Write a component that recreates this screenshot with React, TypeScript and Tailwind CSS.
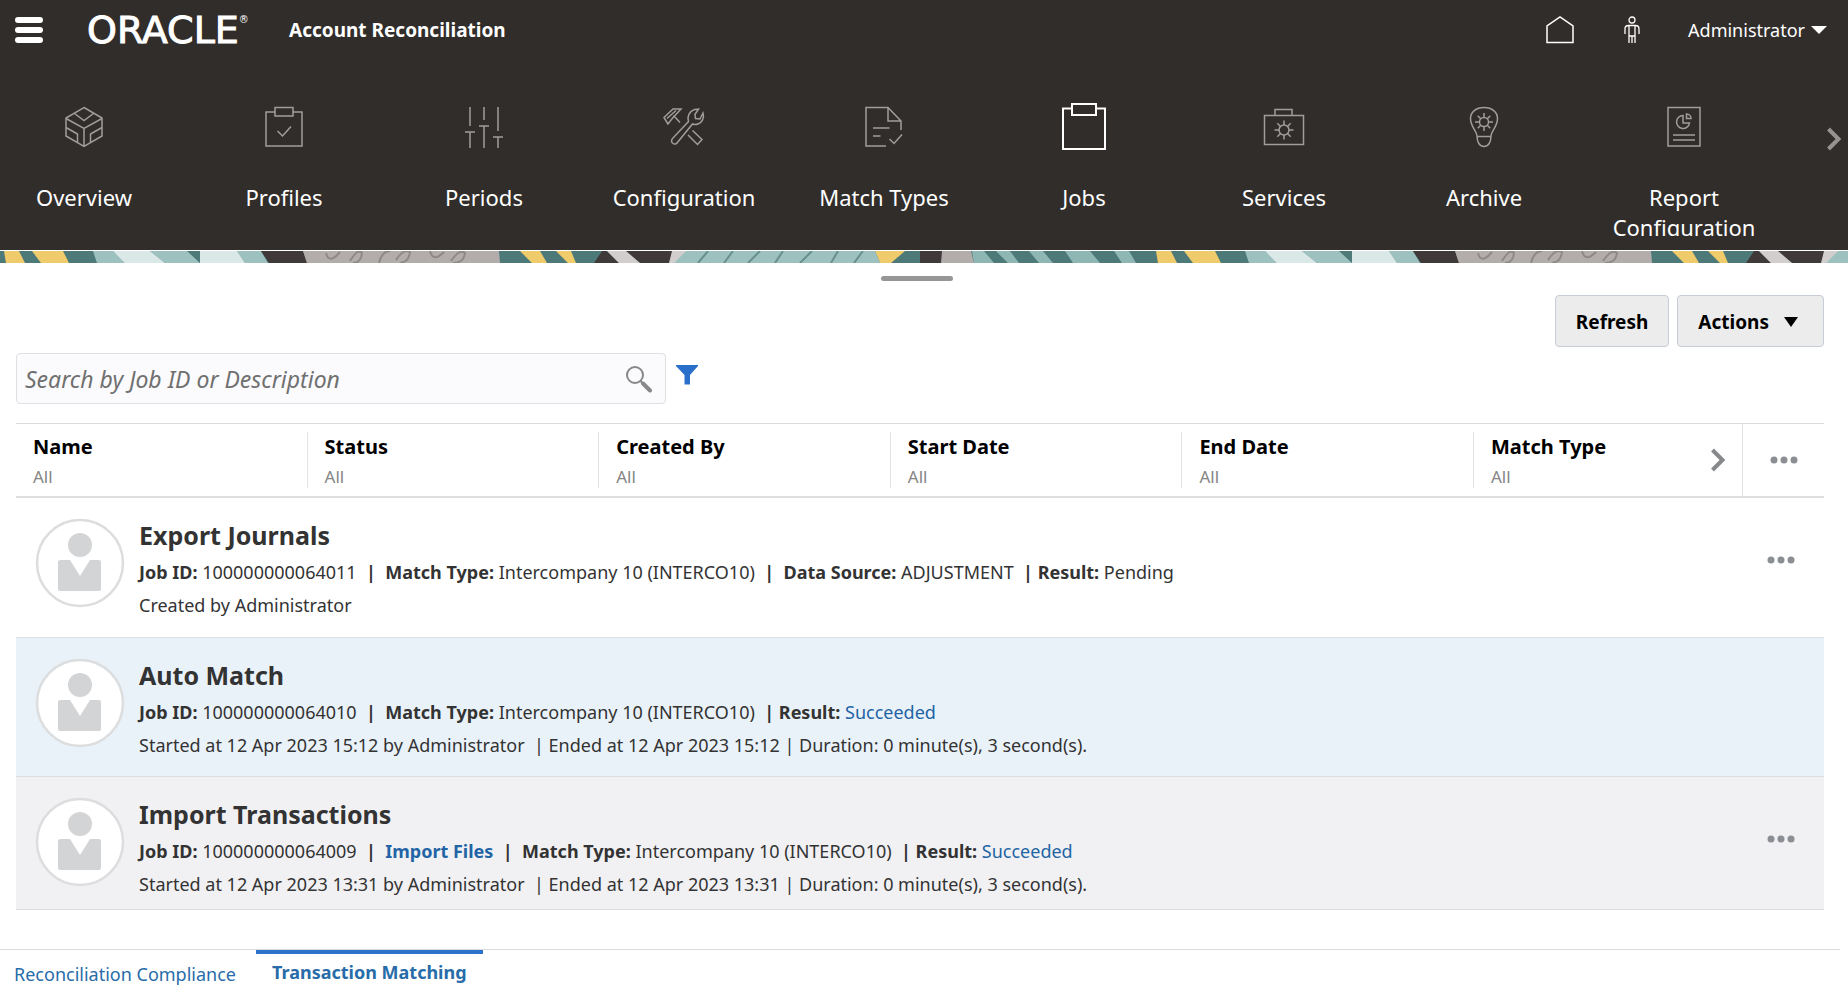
import React from 'react';

const tabs = [
  { label: 'Overview', icon: <OverviewIcon /> },
  { label: 'Profiles', icon: <ProfilesIcon /> },
  { label: 'Periods', icon: <PeriodsIcon /> },
  { label: 'Configuration', icon: <ConfigurationIcon /> },
  { label: 'Match Types', icon: <MatchTypesIcon /> },
  { label: 'Jobs', icon: <JobsIcon />, active: true },
  { label: 'Services', icon: <ServicesIcon /> },
  { label: 'Archive', icon: <ArchiveIcon /> },
  { label: 'Report Configuration', icon: <ReportIcon /> },
];

const filters = ['Name', 'Status', 'Created By', 'Start Date', 'End Date'];

interface SvgIconProps {
  children: React.ReactNode;
}

// Navigation glyphs share one 48px canvas
function NavSvg({ children }: SvgIconProps) {
  return (
    <svg className="h-12 w-12" viewBox="0 0 48 48" fill="none" stroke="currentColor" strokeWidth="1.5" aria-hidden="true">
      {children}
    </svg>
  );
}

function OverviewIcon() {
  return (
    <NavSvg>
      <path d="M24 4.500 42 15v18L24 43.500 6 33V15z" />
      <path d="M6 15.500 24 25.500 42 15.500M24 25.500v18M14.500 10.500 24 17.500l9.500-7M6 24.500l11.500 6.500v8.500M42 24.500l-11.500 6.500v8.500" />
    </NavSvg>
  );
}

function ProfilesIcon() {
  return (
    <NavSvg>
      <path d="M15 9H6v34h36V9h-9" />
      <path d="M15 4.500h18V13H15zM17.500 28l5 5L31 23.500" />
    </NavSvg>
  );
}

function PeriodsIcon() {
  return (
    <NavSvg>
      <path d="M10 4v19M24 4v13M38 4v24M5 29h10M10 29v16M19 23h10M24 23v22M33 34h10M38 34v11" />
    </NavSvg>
  );
}

function ConfigurationIcon() {
  return (
    <NavSvg>
      <path d="M4 14.500 13 6h8l-6 6.500-2 2L8 21zM4 14.500l4 6.500M7 15.500l9-8M13.500 12.500l6.500 7" />
      <path d="M28.500 18.500c-1.500-5 .5-10 6-12l4-.3-3.500 5 .5 4.300 4.500.5 3-6c1.500 5-1 9.500-5 11-2 .8-4 .5-5.500 0L17 40c-1.500 2-5.500 1-5.500-2 0-1.500.5-2 1.500-3z" />
      <path d="m32.500 27.500 9.500 9-4.500 5L28 32" />
    </NavSvg>
  );
}

function MatchTypesIcon() {
  return (
    <NavSvg>
      <path d="M26 43H6V4.500h22L41 18v9M28 4.500V18h13M13 25h16.500M13 33h7.500M29.500 36l4.500 4.500L42 31.500" />
    </NavSvg>
  );
}

function JobsIcon() {
  return (
    <svg className="h-12 w-12" viewBox="0 0 48 48" fill="none" stroke="currentColor" strokeWidth="2" aria-hidden="true">
      <path d="M11 5.500H3V46h42V5.500h-9" />
      <path d="M12 1h24v11H12z" />
    </svg>
  );
}

function ServicesIcon() {
  return (
    <NavSvg>
      <path d="M4.500 12.500h39v29h-39zM15 12.500V6.500h17v6" />
      <circle cx="24" cy="27" r="5" />
      <path d="M24 17.500V22M24 32v4.500M14.500 27H19M29 27h4.500M17.300 20.300l3.200 3.200M27.500 30.500l3.200 3.200M17.300 33.700l3.200-3.200M27.500 23.500l3.200-3.200" />
    </NavSvg>
  );
}

function ArchiveIcon() {
  return (
    <NavSvg>
      <path d="M17 33c0-5-6.500-9-6.500-17.500C10.500 9 16 4.500 24 4.500S37.500 9 37.500 15.500C37.500 24 31 28 31 33c0 5-2 10.500-7 10.500S17 38 17 33zM17 33.500h14" />
      <circle cx="24" cy="19" r="4.500" />
      <path d="M24 10v4.500M24 23.500V28M15 19h4.500M28.500 19H33M17.700 12.700l3 3M27.300 22.300l3 3M17.700 25.300l3-3M27.300 15.700l3-3" />
    </NavSvg>
  );
}

function ReportIcon() {
  return (
    <NavSvg>
      <path d="M8 4.500h32V43H8zM13 32h22M13 37h22" />
      <path d="M23 12.500a6.500 6.500 0 1 0 6.500 7.500H23zM26.500 11v4.500h4.500c0-2.500-2-4.500-4.500-4.500z" />
    </NavSvg>
  );
}

function ChevronIcon() {
  return (
    <svg className="h-6 w-4" viewBox="0 0 16 24" fill="none" stroke="currentColor" strokeWidth="4" aria-hidden="true">
      <path d="M2.500 2 12.500 12l-10 10" />
    </svg>
  );
}

function DotsIcon() {
  return (
    <svg className="h-2 w-7" viewBox="0 0 28 8" fill="currentColor" aria-hidden="true">
      <circle cx="4" cy="4" r="3.500" />
      <circle cx="14" cy="4" r="3.500" />
      <circle cx="24" cy="4" r="3.500" />
    </svg>
  );
}

function Avatar() {
  return (
    <svg className="mt-1 h-[90px] w-[90px] shrink-0" viewBox="0 0 90 90" aria-hidden="true">
      <circle cx="45" cy="45" r="43" fill="#fff" stroke="#dcddde" strokeWidth="2.500" />
      <circle cx="45" cy="27" r="12" fill="#d3d4d6" />
      <path d="M26 42h9l10 16 10-16h9q2 0 2 2v27q0 2-2 2H26q-3 0-3-2V44q0-2 3-2z" fill="#d3d4d6" />
    </svg>
  );
}

// Decorative ribbon below the navigation, repeats every 1152px
function Ribbon() {
  return (
    <svg className="block h-3 w-full" aria-hidden="true">
      <defs>
        <pattern id="ribbon" width="1152" height="12" patternUnits="userSpaceOnUse">
          <path fill="#4e7979" d="M0 0h1152v12H0z" />
          <path fill="#f0cb6b" d="M4 0h15l6 12H6zM32 0h31l6 12H41zM520 0h20l7 12h-15zM556 0h15l5 12h-8zM875 0h30l-14 12h-11z" />
          <path fill="#9dc1be" d="M93 0h20l14 12H97zM150 0h37l13 12h-35zM237 0h24l7 12h-23zM684 0h191l5 12H672z" />
          <path fill="#dbe8e8" d="M113 0h37l15 12h-40zM200 0h37l8 12h-45z" />
          <path fill="#3f3a39" d="M261 0h42l4 12h-38zM602 0h5l12 12h-25zM625 0h50l-6 12h-29zM920 0h22v12h-22z" />
          <path fill="#b2adab" d="M303 0h196l1 12H307zM942 0h29l3 12h-33z" />
          <path fill="#d2cecd" d="M607 0h19l14 12h-21zM672 0h14l-12 12h-5z" />
          <path fill="#8eb7b4" d="M972 0h12l10 12h-20zM996 0h14l9 12h-11zM1029 0h14l10 12h-14zM1065 0h25l10 12h-27zM1114 0h15l7 12h-14z" />
          <path stroke="#668f8e" strokeWidth="2" fill="none" d="M708 0l-10 12M733 0l-9 12M760 0l-12 12M783 0l-8 12M812 0l-12 12M838 0l-7 12M863 0l-9 12" />
          <path stroke="#8e8987" strokeWidth="2" fill="none" d="M326 2q3 12 14-1M350 10q8-13 12-8-1 10-9 10M379 12q3-12 11-12M396 9q8-12 14-8-1 10-10 11M430 0q3 12 14 1M451 10q9-13 14-8-1 10-12 10" />
        </pattern>
      </defs>
      <rect width="100%" height="12" fill="url(#ribbon)" />
    </svg>
  );
}

function JobActions() {
  return (
    <button aria-label="Job actions" className="mr-[29px] self-start pt-[42px] text-[#8b8e92]">
      <DotsIcon />
    </button>
  );
}

export default function App() {
  return (
    <div className="min-h-screen overflow-hidden bg-white font-['Noto_Sans',sans-serif] text-[#333333]">
      <header className="h-[250px] bg-[#312d2a] text-white">
        <div className="flex h-[60px] items-center pl-[15px] pr-[21px]">
          <button aria-label="Navigator" className="flex w-7 flex-col gap-1">
            <span className="h-1.5 rounded-sm bg-white" />
            <span className="h-1.5 rounded-sm bg-white" />
            <span className="h-1.5 rounded-sm bg-white" />
          </button>
          <div className="ml-11 flex w-[166px] font-['DejaVu_Sans',sans-serif] text-[38px] leading-[60px] [-webkit-text-stroke:1px_white]">
            ORACLE<sup className="top-0 text-[10px] leading-10 [-webkit-text-stroke:0]">®</sup>
          </div>
          <h1 className="ml-9 text-[19px] font-bold">Account Reconciliation</h1>
          <div className="ml-auto flex items-center">
            <button aria-label="Home" className="mr-12">
              <svg className="h-7 w-7" viewBox="0 0 28 28" fill="none" stroke="currentColor" strokeWidth="1.500">
                <path d="M1 26.500V10L14 1l13 9v16.500z" />
              </svg>
            </button>
            <button aria-label="Accessibility" className="mr-[46px]">
              <svg className="h-7 w-5" viewBox="0 0 20 28" fill="none" stroke="currentColor" strokeWidth="1.300">
                <circle cx="10" cy="4" r="3" />
                <path d="M3 18v-5q0-3.500 3.500-3.500h7q3.500 0 3.500 3.500v5M7 27V10M13 27V10M7 20h6M10 20v7" />
              </svg>
            </button>
            <button className="flex items-center gap-1.5 text-[18px]">
              Administrator
              <svg className="h-2 w-4" viewBox="0 0 16 8" fill="currentColor" aria-hidden="true">
                <path d="M0 0h16L8 8z" />
              </svg>
            </button>
          </div>
        </div>
        <nav className="-ml-4 flex h-44 items-start overflow-hidden">
          {tabs.map((tab) => (
            <button key={tab.label} className="flex w-[200px] shrink-0 flex-col items-center pt-[43px]">
              <span className={tab.active ? 'text-white' : 'text-[#a09d9a]'}>{tab.icon}</span>
              <span className="mt-[31px] px-6 text-[22px] leading-[30px]">{tab.label}</span>
            </button>
          ))}
          <button aria-label="More tabs" className="ml-auto mr-1.5 mt-[67px] text-[#969492]">
            <ChevronIcon />
          </button>
        </nav>
      </header>
      <div className="pt-px">
        <Ribbon />
      </div>

      <main>
        <div className="flex h-8 justify-center pt-[13px]">
          <span className="ml-[-14px] h-[5px] w-[72px] rounded-sm bg-[#969696]" />
        </div>
        <div className="flex justify-end gap-2 px-6 text-[19px] font-bold text-black">
          <button className="h-[52px] rounded border border-[#c7cdd6] bg-[#ececed] px-5 pt-0.5">Refresh</button>
          <button className="flex h-[52px] items-center gap-[15px] rounded border border-[#c7cdd6] bg-[#ececed] pl-5 pr-[25px] pt-0.5">
            Actions
            <svg className="h-2.5 w-3.5" viewBox="0 0 14 10" aria-hidden="true">
              <path d="M0 0h14L7 10z" />
            </svg>
          </button>
        </div>

        <div className="mt-1.5 flex px-4">
          <div className="flex h-[51px] w-[650px] items-center rounded-sm border border-[#dfe0e2] bg-[#fbfbfd] pl-2 pr-3">
            <input
              type="text"
              aria-label="Search by Job ID or Description"
              placeholder="Search by Job ID or Description"
              className="min-w-0 flex-1 pt-0.5 text-[23px] italic outline-none placeholder:text-[#707070]"
            />
            <button aria-label="Search" className="text-[#86888a]">
              <svg className="h-7 w-7" viewBox="0 0 28 28" fill="none" stroke="currentColor" aria-hidden="true">
                <circle cx="10" cy="10" r="8" strokeWidth="2" />
                <path d="m15.500 16 3 3" strokeWidth="2" />
                <path d="m18 18.500 7 7" strokeWidth="4" strokeLinecap="round" />
              </svg>
            </button>
          </div>
          <button aria-label="Filter" className="ml-[9px] mt-3 self-start text-[#2a70cb]">
            <svg className="h-5 w-6" viewBox="0 0 24 20" fill="currentColor" aria-hidden="true">
              <path d="M1 0h22v1l-8 9v9.500H9.500V10L1 1z" />
            </svg>
          </button>
        </div>

        <section className="ml-4 mr-6 mt-[19px]">
          <div className="grid grid-cols-[repeat(5,minmax(0,1fr))_269px_81px] border-t border-b-2 border-t-[#dcdcdc] border-b-[#dcdedf]">
            {filters.map((name) => (
              <button key={name} className="my-2 h-[56px] border-r border-[#e2e3e4] pl-[17px] text-left">
                <span className="block text-[20px] font-bold leading-[30px] text-black">{name}</span>
                <span className="block text-[17px] leading-[30px] text-[#858585]">All</span>
              </button>
            ))}
            <div className="flex items-center justify-between border-r border-[#e2e3e4] pl-[17px] pr-4">
              <button className="h-[56px] text-left">
                <span className="block text-[20px] font-bold leading-[30px] text-black">Match Type</span>
                <span className="block text-[17px] leading-[30px] text-[#858585]">All</span>
              </button>
              <button aria-label="More filters" className="text-[#86888a]">
                <ChevronIcon />
              </button>
            </div>
            <button aria-label="Filter options" className="flex items-center justify-center text-[#8b8e92]">
              <DotsIcon />
            </button>
          </div>

          <ul className="text-[18px] leading-[33px]">
            <li className="flex gap-3.5 pb-[15px] pl-[19px] pt-4">
              <Avatar />
              <div className="flex-1 whitespace-pre-wrap">
                <h2 className="text-[25px] font-bold leading-[42px]">Export Journals</h2>
                <p><b>Job ID:</b> 100000000064011<b>  |  Match Type:</b> Intercompany 10 (INTERCO10)<b>  |  Data Source:</b> ADJUSTMENT<b>  | Result:</b> Pending</p>
                <p>Created by Administrator</p>
              </div>
              <JobActions />
            </li>
            <li className="flex gap-3.5 border-t border-[#d9dfe4] bg-[#eaf2f9] pb-3.5 pl-[19px] pt-4">
              <Avatar />
              <div className="flex-1 whitespace-pre-wrap">
                <h2 className="text-[25px] font-bold leading-[42px]">Auto Match</h2>
                <p><b>Job ID:</b> 100000000064010<b>  |  Match Type:</b> Intercompany 10 (INTERCO10)<b>  | Result:</b> <a href="#" className="text-[#2264a5]">Succeeded</a></p>
                <p>Started at 12 Apr 2023 15:12 by Administrator  | Ended at 12 Apr 2023 15:12 | Duration: 0 minute(s), 3 second(s).</p>
              </div>
            </li>
            <li className="flex gap-3.5 border-y border-[#dcdddf] bg-[#f1f1f3] pb-2 pl-[19px] pt-4">
              <Avatar />
              <div className="flex-1 whitespace-pre-wrap">
                <h2 className="text-[25px] font-bold leading-[42px]">Import Transactions</h2>
                <p><b>Job ID:</b> 100000000064009<b>  |  <a href="#" className="text-[#2264a5]">Import Files</a>  |  Match Type:</b> Intercompany 10 (INTERCO10)<b>  | Result:</b> <a href="#" className="text-[#2264a5]">Succeeded</a></p>
                <p>Started at 12 Apr 2023 13:31 by Administrator  | Ended at 12 Apr 2023 13:31 | Duration: 0 minute(s), 3 second(s).</p>
              </div>
              <JobActions />
            </li>
          </ul>
        </section>
      </main>

      <footer className="mr-2 mt-[39px] flex border-t border-[#d9dcdd] text-[18px] text-[#286ca9]">
        <a href="#" className="mr-5 pl-3.5 pt-2 leading-8">Reconciliation Compliance</a>
        <a href="#" className="border-t-4 border-[#2c72cc] px-4 pt-0.5 font-bold leading-8">Transaction Matching</a>
      </footer>
    </div>
  );
}
